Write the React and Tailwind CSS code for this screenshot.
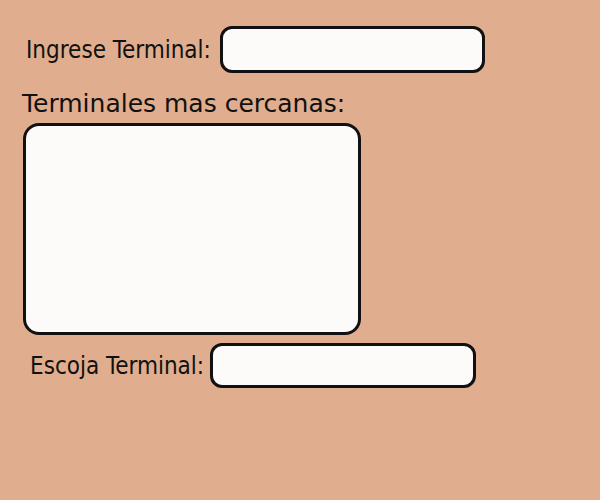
import React from 'react';

const boxCls = 'bg-[#fcfbfa] border-[3px] border-[#111] shrink-0';
const labelCls = "font-['DejaVu_Sans_Condensed','DejaVu_Sans',sans-serif] text-[24px] leading-none";

export default function App() {
    return (
        <div className="w-[600px] h-[500px] bg-[#e0ad8e] text-[#111] font-['DejaVu_Sans',sans-serif] overflow-hidden">
            <div className="flex items-center pt-[26px] pl-[26px]">
                <span className={labelCls}>Ingrese Terminal:</span>
                <div className={`${boxCls} ml-[9px] w-[265px] h-[47px] rounded-[12px]`} />
            </div>
            <div className="pl-[22px] mt-[16px] text-[25px] leading-[30px]">Terminales mas cercanas:</div>
            <div className={`${boxCls} ml-[23px] mt-[4px] w-[338px] h-[212px] rounded-[16px]`} />
            <div className="flex items-center pt-[8px] pl-[30px]">
                <span className={labelCls}>Escoja Terminal:</span>
                <div className={`${boxCls} ml-[6px] w-[266px] h-[45px] rounded-[12px]`} />
            </div>
        </div>
    );
}
